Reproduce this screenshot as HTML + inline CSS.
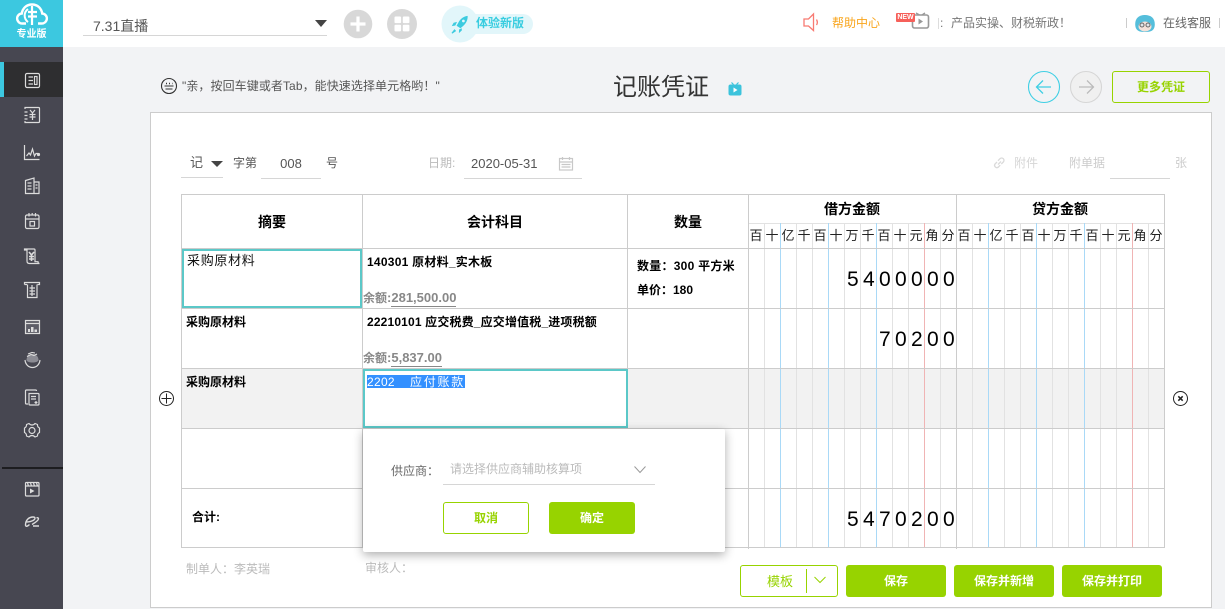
<!DOCTYPE html>
<html lang="zh">
<head>
<meta charset="utf-8">
<title>记账凭证</title>
<style>
html,body{margin:0;padding:0;width:1225px;height:609px;overflow:hidden;background:#f2f3f5;font-family:"Liberation Sans","Noto Sans CJK SC",sans-serif;}
.a{position:absolute;}
.t{position:absolute;white-space:pre;line-height:20px;height:20px;font-size:12px;color:#333;}
.c{text-align:center;}
.b{font-weight:bold;color:#000;}
.g{color:#bbb;}
.d{position:absolute;white-space:pre;font-size:21px;line-height:24px;height:24px;letter-spacing:4.32px;color:#000;left:0;}
.u{position:absolute;height:1px;background:#d6d6d6;}
.btn{position:absolute;box-sizing:border-box;border-radius:3px;text-align:center;font-size:12px;font-weight:bold;height:32px;line-height:32px;background:#97d300;color:#fff;}
.sub{position:absolute;top:226px;width:16px;margin-left:-1px;text-align:center;font-size:13px;line-height:20px;color:#222;}
</style>
</head>
<body>
<!-- top bar -->
<div class="a" style="left:0;top:0;width:1225px;height:47px;background:#fff"></div>
<!-- sidebar -->
<div class="a" style="left:0;top:47px;width:63px;height:562px;background:#474751"></div>
<div class="a" style="left:0;top:62px;width:63px;height:35px;background:#2e2e30"></div>
<div class="a" style="left:0;top:62px;width:4px;height:35px;background:#3cc8e0"></div>
<div class="a" style="left:2px;top:467px;width:61px;height:2px;background:#1d1d20"></div>
<div class="a" style="left:0;top:0;width:63px;height:47px;background:#3cc8e0"></div>

<svg class="a" style="left:0;top:0" width="63" height="609" viewBox="0 0 63 609" fill="none" stroke="#dcdcdc" stroke-width="1.2">
  <!-- logo -->
  <path d="M26 23.500h-3.500a5 5 0 0 1-.7-10c.7-5 4.500-9 10.200-9s9.500 4 10.200 9a5 5 0 0 1-.7 10H38" stroke="#fff" stroke-width="2.400"/>
  <path d="M32 6v19M28 12h9M28 16.500h9" stroke="#fff" stroke-width="2.200"/>
  <path d="M28 9a8 8 0 0 0 0 13" stroke="#fff" stroke-width="2"/>
  <!-- 1 -->
  <rect x="25.500" y="73.500" width="14" height="14" rx="1.500"/><path d="M28.500 77h4.500M28.500 80.500h4.500M28.500 84h4.500"/><rect x="34.500" y="76.500" width="2.500" height="8"/>
  <!-- 2 -->
  <path d="M25 109v-1.500h13.500a1 1 0 0 1 1 1v13a1 1 0 0 1-1 1H25v-1.500M24.500 112h3M24.500 115.500h3M24.500 119h3"/><path d="M30 110l2.500 3 2.500-3M32.500 113v7M29.500 114.500h6M29.500 117h6"/>
  <!-- 3 -->
  <path d="M24.500 145v14.500h15"/><path d="M26.500 156l2.500-3 1.500 2 2-6 2 7 1.500-2.500h2"/><circle cx="38.500" cy="154.500" r="1" fill="#dcdcdc"/>
  <!-- 4 -->
  <path d="M25.500 193.500v-13l8.500-2.500v15.500zM34 182h5v11.500h-13.500"/><path d="M27.500 183h4M27.500 186h4M27.500 189h4M35.500 185h2M35.500 188h2"/>
  <!-- 5 -->
  <rect x="25.500" y="215" width="13.500" height="13.500" rx="1.500"/><path d="M25.500 219h13.500M29 213v3.500M35.500 213v3.500M32.200 213v2"/><rect x="30" y="221.500" width="4.500" height="4.500"/>
  <!-- 6 -->
  <path d="M24.500 250h2.500v11c0 1.500 1 2.500 2.500 2.500h10c-1 0-1.500-.8-1.500-1.800H35V250a1 1 0 0 0-1-1H24.500z"/><path d="M29 252l2.500 3 2.500-3M31.500 255v6M29 256.500h5M29 259h5" stroke-width="1.600"/>
  <!-- 7 -->
  <path d="M24.500 284.500v-2h15v2h-2M27 284.500h-2.500M27.500 284.500v13h9.500v-13"/><path d="M29.500 288h5.500M29.500 291h5.500M29.500 294h5.500M32 285v11"/>
  <!-- 8 -->
  <rect x="25.500" y="320.500" width="14" height="13" fill="#5d5d67"/><path d="M25.500 323.500h14"/><path d="M28 332v-3h2v3zM31 332v-5h2.500v5zM34.500 332v-2.500h2.500v2.500z" fill="#dcdcdc" stroke="none"/>
  <!-- 9 -->
  <path d="M25 360c.5 4.500 3.500 7.500 7.500 7.500S39.500 364.500 40 360"/><path d="M26.500 360a6 6 0 0 1 12 0c0 1.500-3 2.500-6 2.500s-6-1-6-2.500z" fill="#8c8c94" stroke="none"/><path d="M27 356.500l4-2 3 1 3-1.500M28 354l4-1.500 3 .5" stroke-width="1.100"/>
  <!-- 10 -->
  <path d="M28 404h-1.500a1 1 0 0 1-1-1v-12a1 1 0 0 1 1-1h9a1 1 0 0 1 1 1"/><path d="M29 393.500h9a1 1 0 0 1 1 1v9.500a1 1 0 0 1-1 1h-8a1 1 0 0 1-1-1z"/><path d="M31 396.500h5M31 399h5M36 401v3M34.500 402.500h3"/>
  <!-- 11 -->
  <path d="M29 423.500c.8 1 1.800 1.500 3 1.500s2.200-.5 3-1.500l2.500 1c-.2 1.500.6 2.800 2 3.500v4.500c-1.400.7-2.200 2-2 3.500l-2.500 1c-.8-1-1.800-1.500-3-1.500s-2.200.5-3 1.500l-2.500-1c.2-1.500-.6-2.800-2-3.500V428c1.400-.7 2.200-2 2-3.500z" stroke-linejoin="round"/><circle cx="32" cy="430.500" r="3"/>
  <!-- 12 -->
  <rect x="25.500" y="482.500" width="13.500" height="13.500" rx="1"/><path d="M25.500 486h13.500M27.500 483l1 3M30.500 483l1 3M33.500 483l1 3M36.500 483l1 3"/><path d="M30 488.500v5l4.500-2.500z" fill="#dcdcdc" stroke="none"/>
  <!-- 13 -->
  <path d="M25.500 525c0-5 3.500-8 7.500-8 2.500 0 3 2-.5 3.800-2.500 1.200-4.500 1.200-6 1M25.500 525c0 2 2 1.500 4-.5M32 524.500c2.500-1.500 6.500-4 6.500-5.800 0-1-1-1.200-2-.7M33 526h6" stroke-width="1.400"/>
</svg>
<div class="t c" style="left:0;top:25px;width:63px;color:#fff;font-size:10px;font-weight:bold">专业版</div>

<!-- select -->
<div class="t" style="left:93px;top:16px;font-size:14px;color:#555">7.31直播</div>
<div class="u" style="left:83px;top:35px;width:244px"></div>
<div class="a" style="left:315px;top:20px;width:0;height:0;border-left:6px solid transparent;border-right:6px solid transparent;border-top:7px solid #444"></div>

<!-- round buttons -->
<svg class="a" style="left:340px;top:5px" width="200" height="40" viewBox="0 0 200 40">
  <circle cx="18" cy="19" r="14.300" fill="#d8d8d8"/>
  <path d="M18 11.500v15M10.500 19h15" stroke="#fff" stroke-width="3.200"/>
  <circle cx="62" cy="19" r="15" fill="#d8d8d8"/>
  <rect x="54.500" y="11.500" width="6.600" height="6.600" rx="1" fill="#fff"/><rect x="62.800" y="11.500" width="6.600" height="6.600" rx="1" fill="#fff"/>
  <rect x="54.500" y="19.800" width="6.600" height="6.600" rx="1" fill="#fff"/><rect x="62.800" y="19.800" width="6.600" height="6.600" rx="1" fill="#fff"/>
  <rect x="115" y="9" width="78" height="20" rx="10" fill="#e2f6fa"/>
  <circle cx="120" cy="19" r="18.500" fill="#e2f6fa"/>
  <g transform="translate(120 19) scale(.85) translate(-123 -18)">
  <path d="M132 8.500c-5 .5-8.500 3.500-11 8l-2 3.500 4.500 3 3-2.500c3.500-2.800 5.800-7.200 5.500-12z" fill="#3ccbdf"/>
  <path d="M119.500 15.500l-4 1-2.200 4 4.200-.7zM125 23l.2 2.500-3.500 3.200.2-4.200zM116.500 24l-3.500 4.500 1 .8 4.500-3z" fill="#3ccbdf"/>
  <circle cx="127" cy="14.500" r="1.600" fill="#e2f6fa"/>
  </g>
</svg>
<div class="t" style="left:476px;top:13px;color:#38cde0;font-weight:bold">体验新版</div>

<!-- right of top bar -->
<svg class="a" style="left:800px;top:10px" width="24" height="24" viewBox="0 0 24 24" fill="none" stroke="#f87a72" stroke-width="1.300">
  <path d="M4 9h4.500L13.500 4v16.500l-5-4.500H4z"/><path d="M16.500 9.500c1 1.800 1 4 0 5.500"/>
</svg>
<div class="t" style="left:832px;top:13px;color:#f9a51c">帮助中心</div>
<svg class="a" style="left:894px;top:10px" width="40" height="22" viewBox="0 0 40 22">
  <rect x="18.500" y="5" width="16" height="13" rx="2" fill="none" stroke="#999" stroke-width="1.600"/>
  <path d="M22 3l3.500 2M31 3l-3 2" stroke="#999" stroke-width="1.400" fill="none"/>
  <path d="M24.500 8.500v6l4.500-3z" fill="#999"/>
  <rect x="2" y="3" width="19" height="9" rx="1" fill="#f6605a"/>
</svg>
<div class="a" style="left:896px;top:13px;width:19px;height:9px;line-height:9px;font-size:7px;font-weight:bold;color:#fff;text-align:center">NEW</div>
<div class="a" style="left:938px;top:18px;width:1px;height:11px;background:#ddd"></div>
<div class="t" style="left:940px;top:13px;color:#777">:</div>
<div class="t" style="left:951px;top:13px;color:#777">产品实操、财税新政！</div>
<div class="a" style="left:1126px;top:18px;width:1px;height:10px;background:#ccc"></div>
<svg class="a" style="left:1134px;top:13px" width="22" height="20" viewBox="0 0 22 20">
  <path d="M1.500 14C0 6 4.500 2 11 2s11 4 9.500 12c-1 3.500-3.500 5-9.500 5s-8.500-1.500-9.500-5z" fill="#55bedb"/>
  <ellipse cx="11" cy="13.500" rx="6.500" ry="5" fill="#f3e2da"/>
  <circle cx="8" cy="12" r="2" fill="#dfe6ea" stroke="#666"/><circle cx="14" cy="12" r="2" fill="#dfe6ea" stroke="#666"/>
</svg>
<div class="t" style="left:1163px;top:13px;color:#666">在线客服</div>
<div class="a" style="left:1219px;top:18px;width:1px;height:10px;background:#ccc"></div>

<!-- hint row -->
<svg class="a" style="left:160px;top:77px" width="18" height="18" viewBox="0 0 18 18" fill="none" stroke="#333" stroke-width="1.100">
  <circle cx="9" cy="9" r="7.500"/><path d="M4.500 9h9M5.500 12h7"/><path d="M6 6.500h1M9 6.500h1M12 6.500h.5" stroke-width="1.400"/>
</svg>
<div class="t" style="left:182px;top:76px;color:#555;letter-spacing:.08px">"亲，按回车键或者Tab，能快速选择单元格哟！"</div>
<div class="t" style="left:613px;top:73px;font-size:24px;line-height:30px;height:30px;color:#333">记账凭证</div>
<svg class="a" style="left:727px;top:81px" width="16" height="16" viewBox="0 0 16 16">
  <rect x="1.500" y="3.500" width="13" height="11" rx="2" fill="#3cc3dc"/>
  <path d="M4.500 1.500l2 2M11.500 1.500l-2 2" stroke="#3cc3dc" stroke-width="1.200"/>
  <path d="M6.500 6.500v5l4-2.500z" fill="#fff"/>
</svg>
<svg class="a" style="left:1026px;top:70px" width="80" height="34" viewBox="0 0 80 34" fill="none">
  <circle cx="18" cy="17" r="15.500" stroke="#3fcfe4" stroke-width="1.100"/>
  <path d="M11 17h14M17 10.500L10.500 17l6.500 6.500" stroke="#3fcfe4" stroke-width="1.300"/>
  <circle cx="60" cy="17" r="15.500" stroke="#d6d6d6" stroke-width="1.100" fill="#f0f0f0"/>
  <path d="M53 17h14M61 10.500l6.500 6.500-6.500 6.500" stroke="#bbb" stroke-width="1.300"/>
</svg>
<div class="a" style="left:1112px;top:71px;width:98px;height:32px;box-sizing:border-box;border:1px solid #97d300;border-radius:3px;text-align:center;line-height:31px;font-size:12px;font-weight:bold;color:#97d300">更多凭证</div>

<!-- panel -->
<div class="a" style="left:150px;top:112px;width:1062px;height:496px;box-sizing:border-box;background:#fff;border:1px solid #ccc;border-bottom-color:#ccc"></div>

<!-- form row -->
<div class="t" style="left:190px;top:153px;color:#555;font-size:13px">记</div>
<div class="a" style="left:211px;top:161px;width:0;height:0;border-left:6px solid transparent;border-right:6px solid transparent;border-top:6px solid #444"></div>
<div class="u" style="left:181px;top:177px;width:42px"></div>
<div class="t" style="left:233px;top:153px;color:#555">字第</div>
<div class="t c" style="left:261px;top:154px;width:60px;color:#555;font-size:13px">008</div>
<div class="u" style="left:261px;top:178px;width:60px"></div>
<div class="t" style="left:326px;top:153px;color:#555">号</div>
<div class="t g" style="left:428px;top:153px">日期:</div>
<div class="t" style="left:471px;top:154px;color:#555;font-size:13px">2020-05-31</div>
<div class="u" style="left:464px;top:178px;width:118px"></div>
<svg class="a" style="left:558px;top:156px" width="16" height="16" viewBox="0 0 16 16" fill="none" stroke="#c8c8c8" stroke-width="1.200">
  <rect x="1.500" y="2.500" width="13" height="11.500"/><path d="M4.500 1v3M11.500 1v3M1.500 6h13M3.500 8.500h9M3.500 11h9"/>
</svg>
<svg class="a" style="left:992px;top:156px" width="14" height="14" viewBox="0 0 14 14" fill="none" stroke="#dadada" stroke-width="1.300">
  <path d="M6 8.500l3-3M5 6l-2 2a2.300 2.300 0 0 0 3.200 3.200l2-2M6 4.700l2-2a2.300 2.300 0 0 1 3.300 3.300l-2 2"/>
</svg>
<div class="t" style="left:1014px;top:153px;color:#d6d6d6">附件</div>
<div class="t" style="left:1069px;top:153px;color:#ccc">附单据</div>
<div class="u" style="left:1110px;top:178px;width:60px"></div>
<div class="t" style="left:1175px;top:153px;color:#ccc">张</div>

<!-- table -->
<div class="a" style="left:182px;top:369px;width:982px;height:59px;background:#f2f2f2"></div>
<svg class="a" style="left:0;top:0" width="1225" height="609" viewBox="0 0 1225 609" shape-rendering="crispEdges">
  <g stroke="#e2e2e2" stroke-width="1">
    <path d="M764.500 223v325M796.500 223v325M812.500 223v325M844.500 223v325M860.500 223v325M892.500 223v325M908.500 223v325M940.500 223v325M972.500 223v325M1004.500 223v325M1020.500 223v325M1052.500 223v325M1068.500 223v325M1100.500 223v325M1116.500 223v325M1148.500 223v325"/>
    <path d="M748 223.500h416"/>
  </g>
  <g stroke="#a9d9f7" stroke-width="1">
    <path d="M780.500 223v325M828.500 223v325M876.500 223v325M988.500 223v325M1036.500 223v325M1084.500 223v325"/>
  </g>
  <g stroke="#f0b4b4" stroke-width="1">
    <path d="M924.500 223v325M1132.500 223v325"/>
  </g>
  <g stroke="#cccccc" stroke-width="1" fill="none">
    <path d="M181.500 194.500H1164.500V547.500H181.500Z"/>
    <path d="M362.500 194v354M627.500 194v354M748.500 194v355M956.500 194v355"/>
    <path d="M181 248.500h984M181 308.500h984M181 368.500h984M181 428.500h984M181 488.500h984"/>
  </g>
</svg>

<!-- headers -->
<div class="t b c" style="left:182px;top:212px;width:180px;font-size:14px">摘要</div>
<div class="t b c" style="left:363px;top:212px;width:264px;font-size:14px">会计科目</div>
<div class="t b c" style="left:628px;top:212px;width:120px;font-size:14px">数量</div>
<div class="t b c" style="left:748px;top:199px;width:208px;font-size:14px">借方金额</div>
<div class="t b c" style="left:956px;top:199px;width:208px;font-size:14px">贷方金额</div>

<div class="sub" style="left:749px">百</div><div class="sub" style="left:765px">十</div><div class="sub" style="left:781px">亿</div><div class="sub" style="left:797px">千</div><div class="sub" style="left:813px">百</div><div class="sub" style="left:829px">十</div><div class="sub" style="left:845px">万</div><div class="sub" style="left:861px">千</div><div class="sub" style="left:877px">百</div><div class="sub" style="left:893px">十</div><div class="sub" style="left:909px">元</div><div class="sub" style="left:925px">角</div><div class="sub" style="left:941px">分</div>
<div class="sub" style="left:957px">百</div><div class="sub" style="left:973px">十</div><div class="sub" style="left:989px">亿</div><div class="sub" style="left:1005px">千</div><div class="sub" style="left:1021px">百</div><div class="sub" style="left:1037px">十</div><div class="sub" style="left:1053px">万</div><div class="sub" style="left:1069px">千</div><div class="sub" style="left:1085px">百</div><div class="sub" style="left:1101px">十</div><div class="sub" style="left:1117px">元</div><div class="sub" style="left:1133px">角</div><div class="sub" style="left:1149px">分</div>

<!-- row 1 -->
<div class="a" style="left:182px;top:249px;width:180px;height:59px;box-sizing:border-box;border:2px solid #5bc8c8;background:#fff"></div>
<div class="t" style="left:187px;top:251px;font-size:13px;letter-spacing:.7px;color:#111">采购原材料</div>
<div class="t b" style="left:367px;top:252px;letter-spacing:.25px">140301 原材料_实木板</div>
<div class="t" style="left:363px;top:288px;color:#888;font-weight:bold;font-size:13px"><span style="font-size:12px">余额</span>:<span style="border-bottom:1px solid #888;padding-bottom:1px">281,500.00</span></div>
<div class="t b" style="left:637px;top:256px;letter-spacing:.25px">数量：300 平方米</div>
<div class="t b" style="left:637px;top:280px">单价：180</div>
<div class="d" style="left:847px;top:268px">5400000</div>

<!-- row 2 -->
<div class="t b" style="left:186px;top:312px">采购原材料</div>
<div class="t b" style="left:367px;top:312px;letter-spacing:.16px">22210101 应交税费_应交增值税_进项税额</div>
<div class="t" style="left:363px;top:348px;color:#888;font-weight:bold;font-size:13px"><span style="font-size:12px">余额</span>:<span style="border-bottom:1px solid #888;padding-bottom:1px">5,837.00</span></div>
<div class="d" style="left:879px;top:328px">70200</div>

<!-- row 3 -->
<div class="t b" style="left:186px;top:372px">采购原材料</div>
<div class="a" style="left:363px;top:369px;width:265px;height:59px;box-sizing:border-box;border:2px solid #5bc8c8;background:#fff"></div>
<div class="a" style="left:367px;top:375px;width:98px;height:13px;background:#3390ff"></div>
<div class="t" style="left:367px;top:372px;color:#fff;letter-spacing:.3px">2202</div>
<div class="t" style="left:410px;top:372px;color:#fff;letter-spacing:1.75px">应付账款</div>
<svg class="a" style="left:158px;top:390px" width="17" height="17" viewBox="0 0 17 17" fill="none" stroke="#222" stroke-width="1">
  <circle cx="8.500" cy="8.500" r="7"/><path d="M8.500 3.500v10M3.500 8.500h10"/>
</svg>
<svg class="a" style="left:1172px;top:390px" width="17" height="17" viewBox="0 0 17 17" fill="none" stroke="#222">
  <circle cx="8.500" cy="8.500" r="7"/><path d="M6.300 6.300l4.400 4.400M10.700 6.300l-4.400 4.400" stroke-width="1.500"/>
</svg>

<!-- total -->
<div class="t b" style="left:192px;top:507px">合计:</div>
<div class="d" style="left:847px;top:508px">5470200</div>

<!-- dialog -->
<div class="a" style="left:363px;top:429px;width:362px;height:123px;background:#fff;border-radius:2px;box-shadow:0 3px 10px rgba(0,0,0,.32)"></div>
<div class="t" style="left:391px;top:461px;color:#666">供应商：</div>
<div class="t" style="left:450px;top:459px;color:#bbb">请选择供应商辅助核算项</div>
<svg class="a" style="left:633px;top:464px" width="14" height="12" viewBox="0 0 14 12" fill="none" stroke="#999" stroke-width="1"><path d="M1.500 2.500L7 8.500l5.500-6"/></svg>
<div class="u" style="left:443px;top:484px;width:212px"></div>
<div class="btn" style="left:443px;top:502px;width:86px;background:#fff;border:1px solid #97d300;color:#97d300;line-height:31px">取消</div>
<div class="btn" style="left:549px;top:502px;width:86px">确定</div>

<!-- footer -->
<div class="t g" style="left:186px;top:559px">制单人：李英瑞</div>
<div class="t g" style="left:365px;top:558px">审核人：</div>
<div class="a" style="left:740px;top:565px;width:98px;height:32px;box-sizing:border-box;border:1px solid #97d300;border-radius:3px;background:#fff"></div>
<div class="t" style="left:767px;top:572px;font-size:13px;color:#97d300">模板</div>
<div class="a" style="left:806px;top:569px;width:1px;height:24px;background:#97d300"></div>
<svg class="a" style="left:813px;top:575px" width="14" height="12" viewBox="0 0 14 12" fill="none" stroke="#97d300" stroke-width="1"><path d="M1.500 2L7 7.500 12.500 2"/></svg>
<div class="btn" style="left:846px;top:565px;width:100px">保存</div>
<div class="btn" style="left:954px;top:565px;width:100px">保存并新增</div>
<div class="btn" style="left:1062px;top:565px;width:100px">保存并打印</div>
</body>
</html>
